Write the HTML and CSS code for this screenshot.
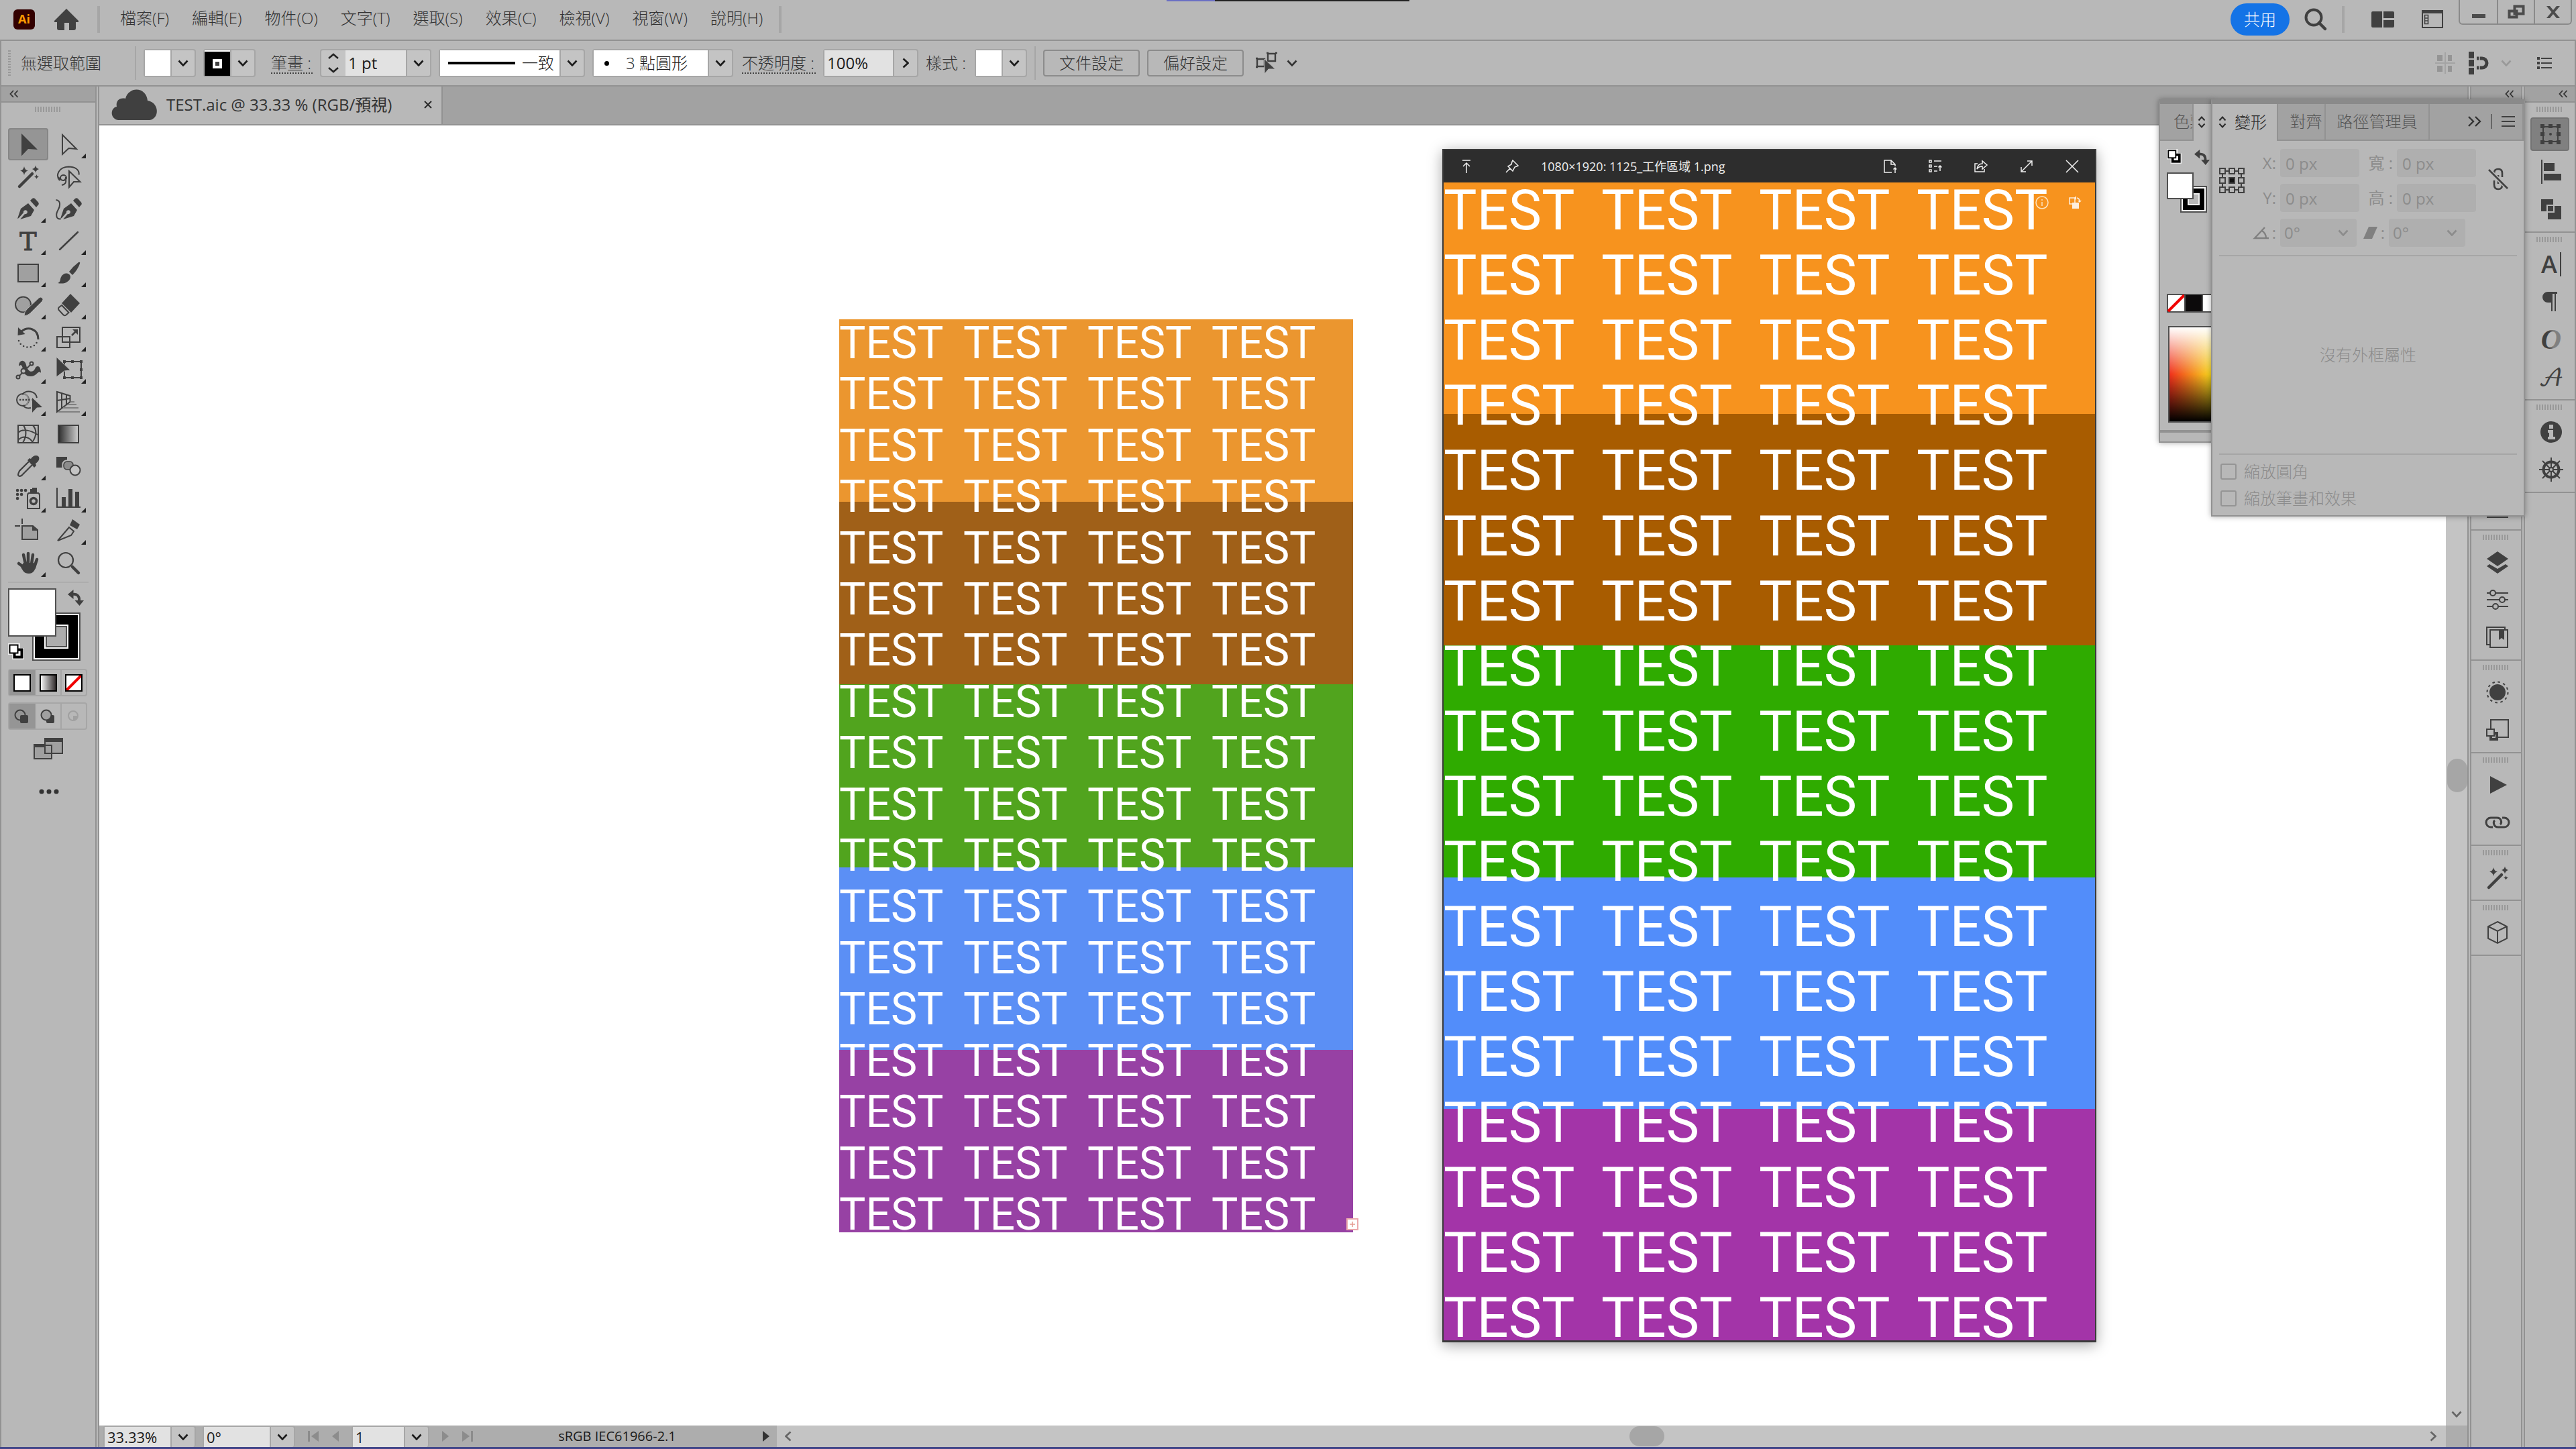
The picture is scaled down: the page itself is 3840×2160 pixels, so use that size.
FILE: index.html
```
<!DOCTYPE html>
<html lang="zh-Hant">
<head>
    <meta charset="UTF-8">
    <meta name="viewport" content="width=device-width, initial-scale=1.0">
    <title>TEST.aic @ 33.33 % (RGB/預視)</title>
    <link rel="stylesheet" href="styles.css">
</head>
<body>
    <svg class="defs" width="0" height="0" aria-hidden="true">
        <defs>
            <linearGradient id="grad-dark"><stop offset="0" stop-color="#2c2c2c"/><stop offset="1" stop-color="#cfcfcf"/></linearGradient>
            <linearGradient id="grad-light"><stop offset="0" stop-color="#ffffff"/><stop offset="1" stop-color="#2a2526"/></linearGradient>
            <linearGradient id="grad-o"><stop offset="0.4" stop-color="#404040"/><stop offset="0.6" stop-color="#808080"/></linearGradient>
            <symbol id="down" viewBox="0 0 16 10"><path d="M1.500 1.500 8 8.500 14.500 1.500" fill="none" stroke="currentColor" stroke-width="2.600"/></symbol>
            <symbol id="right" viewBox="0 0 10 16"><path d="M1.500 1.500 8.500 8 1.500 14.500" fill="none" stroke="currentColor" stroke-width="2.600"/></symbol>
            <symbol id="collapse" viewBox="0 0 14 12"><path d="M6 1 1.500 6 6 11M12.500 1 8 6 12.500 11" fill="none" stroke="currentColor" stroke-width="1.800"/></symbol>
            <symbol id="updown" viewBox="0 0 12 20"><path d="M1.500 7.500 6 2.500 10.500 7.500M1.500 12.500 6 17.500 10.500 12.500" fill="none" stroke="currentColor" stroke-width="2"/></symbol>
            <symbol id="swap" viewBox="0 0 24 24"><path d="M8 7c6-1 10 3 9 10" fill="none" stroke="currentColor" stroke-width="4"/><path d="M0 7 8.500 0v14zM10.500 16H24l-6.500 8z" fill="currentColor"/></symbol>
            <symbol id="defaults" viewBox="0 0 24 24">
                <path d="M0 0h18v7h6v17H6v-7H0z" fill="#ececec"/>
                <rect x="9.500" y="9.500" width="11" height="11" fill="#fff" stroke="#000" stroke-width="4"/>
                <rect x="2.500" y="2.500" width="12" height="12" fill="#fff" stroke="#000" stroke-width="2"/>
            </symbol>
            <symbol id="wand" viewBox="0 0 60 48">
                <path d="M17 39 36 20" stroke="currentColor" stroke-width="4.500" stroke-linecap="round"/>
                <path d="M24 9q1 5.500 6 6.500-5 1-6 6.500-1-5.500-6-6.500 5-1 6-6.500zM41 7.500q1 4.500 5 5.500-4 1-5 5.500-1-4.500-5-5.500 4-1 5-5.500zM42.500 21q.5 3 3.500 3.500-3 .5-3.500 3.500-.5-3-3.500-3.500 3-.5 3.500-3.500z" fill="currentColor"/>
            </symbol>
        </defs>
    </svg>

    <header class="menubar">
        <svg class="logo" width="32" height="30" viewBox="0 0 32 30"><rect width="32" height="30" rx="6" fill="#330000"/><text x="16" y="21" text-anchor="middle" class="logo-text">Ai</text></svg>
        <button class="home" aria-label="首頁"><svg width="36" height="32" viewBox="0 0 36 32"><path d="M18 0 36 18q1 2-2 2h-2v9q0 3-3 3h-7V21h-7v11H7q-3 0-3-3v-9H2q-3 0-2-2z" fill="#404040"/></svg></button>
        <nav class="menus">
            <button>檔案(F)</button>
            <button>編輯(E)</button>
            <button>物件(O)</button>
            <button>文字(T)</button>
            <button>選取(S)</button>
            <button>效果(C)</button>
            <button>檢視(V)</button>
            <button>視窗(W)</button>
            <button>說明(H)</button>
        </nav>
        <div class="menubar-end">
            <button class="share">共用</button>
            <button aria-label="搜尋"><svg width="34" height="34" viewBox="0 0 34 34"><circle cx="14" cy="14" r="11.500" fill="none" stroke="#404040" stroke-width="4"/><path d="m22 22 9 9" stroke="#404040" stroke-width="4.500" stroke-linecap="round"/></svg></button>
            <span class="bar-line"></span>
            <button class="workspace" aria-label="排列文件"><svg width="34" height="24" viewBox="0 0 34 24"><path d="M2 0h14v24H2q-2 0-2-2V2q0-2 2-2zM18 0h14q2 0 2 2v8H18zM18 13h16v9q0 2-2 2H18z" fill="#404040"/></svg></button>
            <button class="workspace" aria-label="工作區"><svg width="32" height="28" viewBox="0 0 32 28"><path d="M1 2h30v24H1z" fill="none" stroke="#404040" stroke-width="2"/><path d="M0 0h32v5H0z" fill="#404040"/><path d="M4.500 7.500h5v13h-5zM4.500 12h5M4.500 16h5" fill="none" stroke="#404040" stroke-width="1.600"/></svg></button>
            <div class="window-buttons">
                <button aria-label="最小化"><svg width="24" height="22" viewBox="0 0 24 22"><path d="M2 14h20v6H2z" fill="#4c4c4c"/></svg></button>
                <button aria-label="還原"><svg width="26" height="22" viewBox="0 0 26 22"><path d="M10.500 2.500h13v11h-13zM2.500 9.500h11v9h-11z" fill="#b8b8b8" stroke="#4c4c4c" stroke-width="4"/></svg></button>
                <button aria-label="關閉"><svg width="22" height="18" viewBox="0 0 22 18"><path d="M1 0h5l5 6 5-6h5l-7.500 9L21 18h-5l-5-6-5 6H1l7.500-9z" fill="#4c4c4c"/></svg></button>
            </div>
        </div>
    </header>

    <section class="controlbar">
        <span class="dots"></span>
        <span class="selection-name">無選取範圍</span>
        <span class="thin-line"></span>
        <button class="combo" aria-label="填色"><span class="swatch"></span><span class="arrow"><svg width="16" height="10"><use href="#down"/></svg></span></button>
        <button class="combo" aria-label="筆畫顏色"><span class="swatch swatch-stroke"></span><span class="arrow"><svg width="16" height="10"><use href="#down"/></svg></span></button>
        <label class="label-dotted label-stroke" for="stroke-width">筆畫 :</label>
        <div class="combo">
            <button class="arrow arrow-left" aria-label="增減"><svg width="18" height="30" viewBox="0 0 18 30"><path d="m2 8 7-6 7 6M2 22l7 6 7-6" fill="none" stroke="#222" stroke-width="2.500"/></svg></button>
            <input id="stroke-width" class="field field-pt" value="1 pt">
            <button class="arrow" aria-label="寬度清單"><svg width="16" height="10"><use href="#down"/></svg></button>
        </div>
        <button class="combo profile"><span class="paper"><span class="profile-line"></span>一致</span><span class="arrow"><svg width="16" height="10"><use href="#down"/></svg></span></button>
        <button class="combo brush"><span class="paper"><span class="brush-dot"></span>3 點圓形</span><span class="arrow"><svg width="16" height="10"><use href="#down"/></svg></span></button>
        <label class="label-dotted label-opacity" for="opacity">不透明度 :</label>
        <div class="combo">
            <input id="opacity" class="field field-opacity" value="100%">
            <button class="arrow" aria-label="不透明度滑桿"><svg width="10" height="16"><use href="#right"/></svg></button>
        </div>
        <span class="label-style">樣式 :</span>
        <button class="combo" aria-label="樣式"><span class="swatch"></span><span class="arrow"><svg width="16" height="10"><use href="#down"/></svg></span></button>
        <span class="thin-line"></span>
        <button class="push">文件設定</button>
        <button class="push">偏好設定</button>
        <button class="isolate" aria-label="選取類似物件"><svg width="36" height="34" viewBox="0 0 36 34"><path d="M19 3h11v11H19zM17 2h3M30 2h3M3 11h11v11H3zM1 10h3M1 23h3" fill="none" stroke="#404040" stroke-width="2.400"/><path d="m14 11 16 15H20l-6 7z" fill="#404040" stroke="#b8b8b8"/></svg><svg width="16" height="10"><use href="#down"/></svg></button>
        <div class="controlbar-end">
            <svg width="30" height="34" viewBox="0 0 30 34"><path d="M3 5h8v9H3zM19 5h6v9h-6zM3 21h8v9H3zM19 21h6v9h-6z" fill="#959595"/><path d="M0 16h30v2H0zM14 1h2v32h-2z" fill="#a4a4a4"/></svg>
            <button aria-label="貼齊"><svg width="28" height="34" viewBox="0 0 28 34"><path d="M0 0h8v10H0zM0 12h8v10H0zM0 24h8v10H0z" fill="#404040"/><path d="M12 10h8a6 6 0 0 1 0 14h-8" fill="none" stroke="#404040" stroke-width="5"/><path d="M16 5v24" stroke="#b8b8b8" stroke-width="1.500"/></svg></button>
            <svg class="faded" width="16" height="10"><use href="#down"/></svg>
            <button class="list-menu" aria-label="面板選單"><svg width="22" height="18" viewBox="0 0 22 18"><path d="M0 0h4v4H0zM0 7h4v4H0zM0 14h4v4H0zM6 1h16v2H6zM6 8h16v2H6zM6 15h16v2H6z" fill="#404040"/></svg></button>
        </div>
    </section>

    <div class="shell">
        <aside class="toolbox">
            <div class="strip"><svg width="14" height="12"><use href="#collapse"/></svg></div>
            <div class="grip"></div>
            <div class="tools">
                <button class="active" aria-label="選取工具"><svg viewBox="0 0 60 48"><path d="M20 8 44 32 30 31 20 41.500z" fill="#404040"/></svg></button>
                <button class="more" aria-label="直接選取"><svg viewBox="0 0 60 48"><path d="M21 10 42 31 30.500 30 21 39z" fill="none" stroke="#404040" stroke-width="2"/></svg></button>
                <button aria-label="魔術棒"><svg viewBox="0 0 60 48"><use href="#wand"/></svg></button>
                <button aria-label="套索"><svg viewBox="0 0 60 48"><path d="M17 30C10 22 16 10 30 9.500c9 0 17 4 15.500 12M27 26a4.500 4 0 1 1-9 0 4.500 4 0 1 1 9 0M15 25c5 7 11 6 11 0M26 29c1 4-1 7-6 8M31 16l16.500 16H38l-7 8z" fill="none" stroke="#404040" stroke-width="2"/></svg></button>
                <button class="more" aria-label="鋼筆"><svg viewBox="0 0 60 48"><path d="M14 39 19 24 30 16 39 26 34 35 18 40 25 32A3 3 0 1 0 23 30L16 38z" fill="#404040"/><path d="m33 12 3-3q2-1.500 4 0l5 5.500q1.500 2 0 4l-3 3.500z" fill="#404040"/></svg></button>
                <button aria-label="曲線"><svg viewBox="0 0 60 48"><g transform="translate(4 0)"><path d="M14 39 19 24 30 16 39 26 34 35 18 40 25 32A3 3 0 1 0 23 30L16 38z" fill="#404040"/><path d="m33 12 3-3q2-1.500 4 0l5 5.500q1.500 2 0 4l-3 3.500z" fill="#404040"/></g><path d="M11.500 11c8 1 6 10 3 15-4 7-3 14 4 13.500" fill="none" stroke="#404040" stroke-width="2"/></svg></button>
                <button class="more" aria-label="文字"><svg viewBox="0 0 60 48"><text x="30" y="38" text-anchor="middle" class="icon-t">T</text></svg></button>
                <button class="more" aria-label="線段"><svg viewBox="0 0 60 48"><path d="M17 37 44 11" stroke="#404040" stroke-width="2.500" stroke-linecap="round"/></svg></button>
                <button class="more" aria-label="矩形"><svg viewBox="0 0 60 48"><path d="M15 11h30v26H15z" fill="#a0a0a0" stroke="#404040" stroke-width="2"/></svg></button>
                <button class="more" aria-label="筆刷"><svg viewBox="0 0 60 48"><path d="M45 8q3-1 2 2-3 9-11 17l-5-5Q37 14 45 8z" fill="#404040"/><path d="M28 24.500c6 1 7 8 1 12-4 3.500-10 3.500-15 2.500 5-2 3-5 5-9q3-6 9-5.500z" fill="#404040"/></svg></button>
                <button class="more" aria-label="點滴筆刷"><svg viewBox="0 0 60 48"><circle cx="22.500" cy="23" r="11.500" fill="#a0a0a0" stroke="#404040" stroke-width="2"/><path d="M24 40q0-7 4-10l18-17q3-2 5 0t0 5L33 36q-3 3-9 4z" fill="#404040" stroke="#b8b8b8"/></svg></button>
                <button class="more" aria-label="橡皮擦"><svg viewBox="0 0 60 48"><path d="M33 7 47 21 34 35 20 21z" fill="#404040"/><path d="m20 24 10.500 11-4 3.500q-2 1.500-4 0L15.500 31q-1-2 0-3.500z" fill="none" stroke="#404040" stroke-width="2"/></svg></button>
                <button class="more" aria-label="旋轉"><svg viewBox="0 0 60 48"><path d="M20 15C30 7 45 11 45 27" fill="none" stroke="#404040" stroke-width="3"/><path d="m15 9-.5 12 11-2z" fill="#404040"/><path d="M16 29c4 12 22 13 27 2" fill="none" stroke="#404040" stroke-width="2.600" stroke-linecap="round" stroke-dasharray="0 5.500"/></svg></button>
                <button class="more" aria-label="縮放"><svg viewBox="0 0 60 48"><path d="M21 9h26v22H21zM13 23h19v16H13z" fill="none" stroke="#404040" stroke-width="2"/><path d="m35 21 7-7" stroke="#404040" stroke-width="2.500"/><path d="M36 12h8v8z" fill="#404040"/></svg></button>
                <button class="more" aria-label="寬度"><svg viewBox="0 0 60 48"><path d="M16 19c0-10 9-11 11-2 2 10 9 13 13 6 2-6 9-6 9 6-4-5-6 5-15 5-8 0-11-5-12-11-1-6-3-7-6-4z" fill="#404040"/><path d="M17 33 33 17" stroke="#404040" stroke-width="2"/><g fill="#b8b8b8" stroke="#404040" stroke-width="2"><circle cx="35" cy="15" r="2.500"/><circle cx="23" cy="26" r="3.500"/><circle cx="15" cy="35" r="2.500"/></g></svg></button>
                <button class="more" aria-label="任意變形"><svg viewBox="0 0 60 48"><path d="M24 12h25v24H24z" fill="none" stroke="#404040" stroke-width="2"/><path d="M22 10h4v4h-4zM34 10h4v4h-4zM47 10h4v4h-4zM47 22h4v4h-4zM47 34h4v4h-4zM34 34h4v4h-4zM22 34h4v4h-4z" fill="#404040"/><path d="m12 5 21 20-9 1-12 9z" fill="#404040" stroke="#b8b8b8"/></svg></button>
                <button class="more" aria-label="形狀建立程式"><svg viewBox="0 0 60 48"><circle cx="22" cy="21" r="9" fill="none" stroke="#404040" stroke-width="2"/><path d="M21 13c6-7 20-6 22 5M22 29c3 4 8 5 12 4" fill="none" stroke="#404040" stroke-width="2"/><path d="M24 12c8 2 8 15 1 17" fill="none" stroke="#8c8c8c" stroke-width="2"/><path d="M17 21h18" stroke="#404040" stroke-width="2.400" stroke-dasharray="2.400 2"/><path d="m36 18 15 14-8 .5-7 7.500z" fill="#404040"/></svg></button>
                <button class="more" aria-label="透視格點"><svg viewBox="0 0 60 48"><path d="m13 9 19.500 6v9L13 39zM20 11v22M27 13v15M13 22l19.500-3" fill="none" stroke="#404040" stroke-width="2"/><path d="M33 24h6M29 28h13M22 33h23M15 39h32" stroke="#808080" stroke-width="2"/></svg></button>
                <button aria-label="網格"><svg viewBox="0 0 60 48"><path d="M15 11h30v26H15zM15 22c7-7 20-3 29 3M15 33c8-8 18-4 22 4M23 11c5 8 5 16-1 26M37 11c7 8 5 16 0 24" fill="none" stroke="#404040" stroke-width="2"/></svg></button>
                <button aria-label="漸層"><svg viewBox="0 0 60 48"><path d="M15 11h30v26H15z" fill="url(#grad-dark)" stroke="#404040" stroke-width="2"/></svg></button>
                <button class="more" aria-label="檢色滴管"><svg viewBox="0 0 60 48"><path d="M31 17 17 31q-2 4-2 6 1 3 5 1l3-3 13-13" fill="none" stroke="#404040" stroke-width="2.200"/><path d="m29 15 3-3 2 1c3-5 8-6 11-4 3 3 1 8-4 11l1 3-3 3z" fill="#404040"/></svg></button>
                <button aria-label="漸變"><svg viewBox="0 0 60 48"><path d="M12 10h16v16H12z" fill="#404040"/><rect x="22" y="16" width="15" height="14" rx="5" fill="#8c8c8c" stroke="#b8b8b8" stroke-width="3"/><rect x="23" y="17" width="14" height="12" rx="5" fill="#8c8c8c" stroke="#404040" stroke-width="1.500"/><circle cx="40" cy="30" r="7.500" fill="#c4c4c4" stroke="#404040" stroke-width="2"/></svg></button>
                <button class="more" aria-label="符號噴灑"><svg viewBox="0 0 60 48"><path d="M14 12h.1M20 12h.1M26 12h.1M14 18h.1M20 18h.1M14 24h.1" stroke="#404040" stroke-width="4.500" stroke-linecap="round"/><path d="M29 19q0-2 2-3h14q2 1 2 3v20H29z" fill="none" stroke="#404040" stroke-width="2"/><path d="M33 10h3V8h7v7H33z" fill="#404040"/><circle cx="38" cy="28" r="4.500" fill="none" stroke="#404040" stroke-width="3.500"/></svg></button>
                <button class="more" aria-label="圖表"><svg viewBox="0 0 60 48"><path d="M13 8v29h35" fill="none" stroke="#404040" stroke-width="2"/><path d="M20 22h6v15h-6zM30 10h6v27h-6zM40 14h6v23h-6z" fill="#404040"/></svg></button>
                <button aria-label="工作區域"><svg viewBox="0 0 60 48"><path d="M21 17h16l7 6v14H21z" fill="#a0a0a0" stroke="#404040" stroke-width="2"/><path d="M36 17v7h8z" fill="#404040"/><path d="M21 6v8M10 17h8" stroke="#404040" stroke-width="2"/></svg></button>
                <button class="more" aria-label="切片"><svg viewBox="0 0 60 48"><path d="m36 7 11 8-4 7-11-6z" fill="#404040"/><path d="m31 19 7 6-4 6-20 8z" fill="none" stroke="#404040" stroke-width="2"/></svg></button>
                <button class="more" aria-label="手形"><svg viewBox="0 0 60 48"><path d="m23 12 3 14M30 10v14M37 12l-2 14M43 19l-4 12M16 25l8 6" stroke="#404040" stroke-width="4.500" stroke-linecap="round"/><path d="M23 24h15l4 4c-2 8-5 12-11 12-7 0-9-4-12-10z" fill="#404040"/></svg></button>
                <button aria-label="縮放顯示"><svg viewBox="0 0 60 48"><circle cx="26" cy="20" r="11" fill="none" stroke="#404040" stroke-width="2.200"/><path d="m36 30 9 9" stroke="#404040" stroke-width="4.500" stroke-linecap="round"/></svg></button>
            </div>
            <div class="paint">
                <svg width="120" height="108" viewBox="0 0 120 108">
                    <path d="M37 37h70v70H37z" fill="#fff" stroke="#505050" stroke-width="2"/>
                    <path d="M40 40h64v64H40z"/>
                    <path d="M54 54h36v36H54z" fill="#fff"/>
                    <path d="M57 57h30v30H57z" fill="#adadad" stroke="#505050" stroke-width="2"/>
                    <path d="M1 1h70v70H1z" fill="#fff" stroke="#505050" stroke-width="2"/>
                    <use href="#swap" x="89" y="2" width="24" height="24"/>
                    <use href="#defaults" x="0" y="82" width="24" height="24"/>
                </svg>
            </div>
            <div class="segment">
                <button class="on" aria-label="顏色"><svg width="26" height="26"><rect x="1" y="1" width="24" height="24" fill="#fff" stroke="#000" stroke-width="2"/></svg></button>
                <button aria-label="漸層"><svg width="26" height="26"><rect x="1" y="1" width="24" height="24" fill="url(#grad-light)" stroke="#000" stroke-width="2"/></svg></button>
                <button aria-label="無"><svg width="26" height="26"><rect x="1" y="1" width="24" height="24" fill="#fff"/><path d="M2 24 24 2" stroke="#f00000" stroke-width="4"/><rect x="1" y="1" width="24" height="24" fill="none" stroke="#000" stroke-width="2"/></svg></button>
            </div>
            <div class="segment">
                <button class="on" aria-label="一般繪製"><svg width="24" height="22"><circle cx="9" cy="9" r="7.500" fill="none" stroke="#404040" stroke-width="2"/><rect x="9" y="9" width="12" height="12" rx="2" fill="#404040"/></svg></button>
                <button aria-label="繪製下層"><svg width="24" height="22"><rect x="9" y="9" width="12" height="12" rx="2" fill="#404040"/><circle cx="9" cy="9" r="7.500" fill="#a0a0a0" stroke="#404040" stroke-width="2"/></svg></button>
                <button aria-label="繪製內側"><svg width="24" height="22"><circle cx="11" cy="10" r="7" fill="none" stroke="#a0a0a0" stroke-width="2"/><path d="M11 10h7q-1 6-7 7z" fill="#a0a0a0"/></svg></button>
            </div>
            <button class="screen-mode" aria-label="螢幕模式"><svg width="44" height="32" viewBox="0 0 44 32"><path d="M1 11h26v20H1zM17 3h26v20H17z" fill="#a0a0a0" stroke="#404040" stroke-width="2"/><path d="M0 9h16v5H0zM16 0h28v6H16z" fill="#404040"/></svg></button>
            <button class="edit-tools" aria-label="編輯工具列"><svg width="30" height="8"><circle cx="4" cy="4" r="3.500"/><circle cx="15" cy="4" r="3.500"/><circle cx="26" cy="4" r="3.500"/></svg></button>
        </aside>

        <main class="document">
            <div class="tabs">
                <div class="tab">
                    <svg width="68" height="46" viewBox="0 0 68 46"><path d="M10 46C-2 44-2 28 8 26 6 16 14 12 21 14 26-5 52-4 54 17 72 20 72 44 57 46z" fill="#404040"/></svg>
                    <span>TEST.aic @ 33.33 % (RGB/預視)</span>
                    <button aria-label="關閉"><svg width="12" height="12"><path d="m1 1 10 10M11 1 1 11" stroke="#2b2b2b" stroke-width="2"/></svg></button>
                </div>
            </div>
            <div class="view">
                <div class="canvas">
                    <section class="art artboard">
                        <div class="bands"><i></i><i></i><i></i><i></i><i></i></div>
                        <div class="lines">
                            <p>TEST&#9;TEST&#9;TEST&#9;TEST</p>
                            <p>TEST&#9;TEST&#9;TEST&#9;TEST</p>
                            <p>TEST&#9;TEST&#9;TEST&#9;TEST</p>
                            <p>TEST&#9;TEST&#9;TEST&#9;TEST</p>
                            <p>TEST&#9;TEST&#9;TEST&#9;TEST</p>
                            <p>TEST&#9;TEST&#9;TEST&#9;TEST</p>
                            <p>TEST&#9;TEST&#9;TEST&#9;TEST</p>
                            <p>TEST&#9;TEST&#9;TEST&#9;TEST</p>
                            <p>TEST&#9;TEST&#9;TEST&#9;TEST</p>
                            <p>TEST&#9;TEST&#9;TEST&#9;TEST</p>
                            <p>TEST&#9;TEST&#9;TEST&#9;TEST</p>
                            <p>TEST&#9;TEST&#9;TEST&#9;TEST</p>
                            <p>TEST&#9;TEST&#9;TEST&#9;TEST</p>
                            <p>TEST&#9;TEST&#9;TEST&#9;TEST</p>
                            <p>TEST&#9;TEST&#9;TEST&#9;TEST</p>
                            <p>TEST&#9;TEST&#9;TEST&#9;TEST</p>
                            <p>TEST&#9;TEST&#9;TEST&#9;TEST</p>
                            <p>TEST&#9;TEST&#9;TEST&#9;TEST</p>
                        </div>
                        <svg class="overset" width="18" height="18"><path d="M1 1h16v16H1z" fill="#fff" stroke="#eba9ac" stroke-width="2"/><path d="M5 9h8M9 5v8" stroke="#e59a90" stroke-width="1.500"/></svg>
                    </section>
                </div>
                <div class="vscroll"><span class="vthumb"></span><svg width="16" height="10"><use href="#down"/></svg></div>
            </div>
            <footer class="status">
                <div class="status-info">
                    <div class="combo"><input class="field" aria-label="縮放" value="33.33%"><button class="arrow" aria-label="縮放清單"><svg width="16" height="10"><use href="#down"/></svg></button></div>
                    <div class="combo"><input class="field" aria-label="旋轉" value="0°"><button class="arrow" aria-label="旋轉清單"><svg width="16" height="10"><use href="#down"/></svg></button></div>
                    <div class="pager">
                        <svg width="18" height="16"><path d="M1 0h3v16H1zM17 0v16L6 8z"/></svg>
                        <svg width="12" height="16"><path d="M11 0v16L1 8z"/></svg>
                    </div>
                    <div class="combo"><input class="field field-page" aria-label="工作區域" value="1"><button class="arrow" aria-label="工作區域清單"><svg width="16" height="10"><use href="#down"/></svg></button></div>
                    <div class="pager">
                        <svg width="12" height="16"><path d="M1 0v16L11 8z"/></svg>
                        <svg width="18" height="16"><path d="M14 0h3v16h-3zM1 0v16L12 8z"/></svg>
                    </div>
                    <span class="profile-name">sRGB IEC61966-2.1</span>
                    <button class="status-more" aria-label="狀態列選單"><svg width="12" height="16"><path d="M1 0v16L11 8z" fill="#333"/></svg></button>
                </div>
                <div class="hscroll">
                    <svg class="flip" width="10" height="16"><use href="#right"/></svg>
                    <span class="hthumb"></span>
                    <svg width="10" height="16"><use href="#right"/></svg>
                </div>
                <div class="corner"></div>
            </footer>
        </main>

        <aside class="dock dock-inner">
            <div class="strip"><svg width="14" height="12"><use href="#collapse"/></svg></div>
            <div class="dock-group dock-covered"><button aria-label="筆畫"><svg width="34" height="34" viewBox="0 0 34 34"><path d="M1 3h32v2H1zM1 14h32v4H1zM1 28h32v5H1z"/></svg></button></div>
            <div class="dock-group">
                <div class="grip"></div>
                <button aria-label="圖層"><svg width="34" height="34" viewBox="0 0 34 34"><path d="M17 1 33 12 17 23 1 12z"/><path d="m1 23 4-3 12 7 12-7 4 3-16 11z"/></svg></button>
                <button aria-label="內容"><svg width="34" height="34" viewBox="0 0 34 34"><path d="M1 7h32M1 17h32M1 27h32" stroke="#404040" stroke-width="2"/><g fill="#b8b8b8" stroke="#404040" stroke-width="2"><circle cx="10" cy="7" r="4"/><circle cx="24" cy="17" r="4"/><circle cx="14" cy="27" r="4"/></g></svg></button>
                <button aria-label="資料庫"><svg width="34" height="34" viewBox="0 0 34 34"><path d="M5 28H1V2h27v4M6 6h26v26H6z" fill="none" stroke="#404040" stroke-width="2"/><path d="M19 6h8v15l-4-3-4 3z"/></svg></button>
            </div>
            <div class="dock-group">
                <div class="grip"></div>
                <button aria-label="外觀"><svg width="34" height="34" viewBox="0 0 34 34"><circle cx="17" cy="17" r="12"/><circle cx="17" cy="17" r="15.500" fill="none" stroke="#404040" stroke-width="2" stroke-dasharray="3.600 4.500"/></svg></button>
                <button aria-label="繪圖樣式"><svg width="34" height="34" viewBox="0 0 34 34"><path d="M7 15V2h26v26H18" fill="none" stroke="#404040" stroke-width="2"/><path d="M5 20h13v13H5z"/><path d="M9 24h5v5H9z" fill="#b8b8b8"/><path d="M1 16h11v10H1z" fill="#b8b8b8" stroke="#404040" stroke-width="2"/></svg></button>
            </div>
            <div class="dock-group">
                <div class="grip"></div>
                <button aria-label="動作"><svg width="34" height="34" viewBox="0 0 34 34"><path d="M6 4 31 17 6 30z"/></svg></button>
                <button aria-label="連結"><svg width="38" height="18" viewBox="0 0 38 18"><path d="M12 16H9A7 7 0 0 1 9 2h9c7 0 8 8 5 10M26 2h3a7 7 0 0 1 0 14h-9c-7 0-8-8-5-10" fill="none" stroke="#404040" stroke-width="3"/></svg></button>
            </div>
            <div class="dock-group">
                <div class="grip"></div>
                <button aria-label="魔術棒"><svg width="60" height="48"><use href="#wand"/></svg></button>
            </div>
            <div class="dock-group">
                <div class="grip"></div>
                <button aria-label="3D"><svg width="34" height="34" viewBox="0 0 34 34"><path d="m17 1 14 7v18l-14 7-14-7V8zM3 8l14 7 14-7M17 15v18" fill="none" stroke="#404040" stroke-width="2"/></svg></button>
            </div>
        </aside>

        <aside class="dock">
            <div class="strip"><svg width="14" height="12"><use href="#collapse"/></svg></div>
            <div class="dock-group">
                <div class="grip"></div>
                <button class="active" aria-label="變形"><svg width="30" height="30" viewBox="0 0 30 30"><path d="M4 4h22v22H4z" fill="none" stroke="#404040" stroke-width="2"/><path d="M0 0h6v6H0zM12 0h6v6h-6zM24 0h6v6h-6zM0 12h6v6H0zM24 12h6v6h-6zM0 24h6v6H0zM12 24h6v6h-6zM24 24h6v6h-6z"/><circle cx="15" cy="15" r="2"/></svg></button>
                <button aria-label="對齊"><svg width="30" height="36" viewBox="0 0 30 36"><path d="M0 0h2v36H0zM4 5h16v12H4zM4 21h26v10H4z"/></svg></button>
                <button aria-label="路徑管理員"><svg width="30" height="30" viewBox="0 0 30 30"><path d="M0 0h18v8H8v10H0zM20 10h10v20H10V20h10zM10 10h8v8h-8z"/></svg></button>
            </div>
            <div class="dock-group">
                <div class="grip"></div>
                <button aria-label="字元"><svg width="30" height="56" viewBox="0 0 30 56"><text x="12" y="41" text-anchor="middle" class="icon-a">A</text><path d="M28 10h2v36h-2z"/></svg></button>
                <button aria-label="段落"><svg width="30" height="36" viewBox="0 0 30 36"><path d="M10 3h14v3h-2v26h-2V6h-3v26h-2V19h-5a8 8 0 0 1 0-16z"/></svg></button>
                <button aria-label="OpenType"><svg width="40" height="56" viewBox="0 0 40 56"><text x="20" y="42" text-anchor="middle" class="icon-o">O</text></svg></button>
                <button aria-label="字符"><svg width="40" height="56" viewBox="0 0 40 56"><text x="20" y="41" text-anchor="middle" class="icon-script">𝒜</text></svg></button>
            </div>
            <div class="dock-group">
                <div class="grip"></div>
                <button aria-label="資訊"><svg width="32" height="32" viewBox="0 0 32 32"><circle cx="16" cy="16" r="16"/><path d="M13 5h6v6h-6zM11 13h8v10h3v4H11v-4h2v-6h-2z" fill="#b8b8b8"/></svg></button>
                <button aria-label="導覽器"><svg width="36" height="36" viewBox="0 0 36 36"><g fill="none" stroke="#404040"><circle cx="18" cy="18" r="11.500" stroke-width="4"/><circle cx="18" cy="18" r="3" stroke-width="2"/><path d="M18 0v15M18 21v15M0 18h15M21 18h15M5 5l11 11M20 20l11 11M31 5 20 16M16 20 5 31" stroke-width="2"/></g></svg></button>
            </div>
        </aside>
    </div>
    <div class="taskbar-edge"></div>
    <div class="capture-edge"></div>

    <section class="panel color-panel">
        <div class="panel-tabs"><button class="color-name">色票</button><span class="active"><svg width="12" height="20"><use href="#updown"/></svg></span></div>
        <div class="color-body">
            <svg width="64" height="96" viewBox="0 0 64 96">
                <use href="#defaults" x="0" y="0" width="22" height="22"/>
                <use href="#swap" x="41" y="1" width="23" height="23"/>
                <path d="M21 56h38v38H21z" fill="#fff" stroke="#505050" stroke-width="2"/>
                <path d="M24 59h32v32H24z"/>
                <path d="M32 67h16v16H32z" fill="#b8b8b8" stroke="#eee" stroke-width="2"/>
                <path d="M1 36h38v38H1z" fill="#fff" stroke="#505050" stroke-width="2"/>
            </svg>
            <svg class="chips" width="66" height="28" viewBox="0 0 66 28"><path d="M1 1h100v26H1z" fill="#fff" stroke="#505050" stroke-width="2"/><path d="M2 26 26 2" stroke="#f00000" stroke-width="4"/><path d="M27 2h26v24H27z" fill="#0c0a0b"/><path d="M27 1v26M53 1v26" stroke="#505050" stroke-width="2"/></svg>
            <div class="spectrum"></div>
        </div>
    </section>

    <section class="panel transform-panel">
        <div class="panel-tabs">
            <button class="active"><svg width="12" height="20"><use href="#updown"/></svg>變形</button>
            <button class="tab-align">對齊</button>
            <button class="tab-path">路徑管理員</button>
            <div class="panel-tools">
                <svg width="20" height="16"><path d="m1 1 7 7-7 7M11 1l7 7-7 7" fill="none" stroke="#333" stroke-width="2.400"/></svg>
                <i></i>
                <svg width="20" height="16"><path d="M0 1h20M0 8h20M0 15h20" stroke="#404040" stroke-width="2"/></svg>
            </div>
        </div>
        <div class="transform-body">
            <svg class="ref-point" width="38" height="38" viewBox="0 0 38 38"><g fill="none" stroke="#404040" stroke-width="2"><path d="M5 5h28v28H5z"/><g fill="#b8b8b8"><path d="M1 1h8v8H1zM15 1h8v8h-8zM29 1h8v8h-8zM1 15h8v8H1zM29 15h8v8h-8zM1 29h8v8H1zM15 29h8v8h-8zM29 29h8v8h-8z"/></g></g><path d="M14 14h10v10H14z" fill="#404040"/><path d="M16 16h6v6h-6z" fill="#111"/></svg>
            <div class="values">
                <div class="value-row">
                    <label for="tx">X:</label><input id="tx" value="0 px" disabled>
                    <label for="tw">寬 :</label><input id="tw" value="0 px" disabled>
                </div>
                <div class="value-row">
                    <label for="ty">Y:</label><input id="ty" value="0 px" disabled>
                    <label for="th">高 :</label><input id="th" value="0 px" disabled>
                </div>
                <div class="value-row angles">
                    <label for="rot"><svg width="24" height="18"><path d="M17 1 2 17h21M13 6q6 4 6 11" fill="none" stroke="#808080" stroke-width="2.400"/></svg>:</label>
                    <span class="pick"><select id="rot" disabled><option>0°</option></select><svg width="16" height="10"><use href="#down"/></svg></span>
                    <label for="shear"><svg width="22" height="18"><path d="M8 0h13l-8 18H0z" fill="#808080"/></svg>:</label>
                    <span class="pick"><select id="shear" disabled><option>0°</option></select><svg width="16" height="10"><use href="#down"/></svg></span>
                </div>
            </div>
            <svg class="unlink" width="32" height="34" viewBox="0 0 32 34"><path d="M10 12V8q0-6 6-6t6 6v6M10 19v6q0 7 6 7t6-6v-2M16 11v3M16 19v5" fill="none" stroke="#404040" stroke-width="2.600"/><path d="m2 3 28 28" stroke="#b8b8b8" stroke-width="6"/><path d="m2 3 28 28" stroke="#404040" stroke-width="2.600"/></svg>
        </div>
        <p class="empty">沒有外框屬性</p>
        <div class="checks">
            <label><input type="checkbox" disabled>縮放圓角</label>
            <label><input type="checkbox" disabled>縮放筆畫和效果</label>
        </div>
    </section>

    <section class="viewer">
        <header class="viewer-bar">
            <button aria-label="置頂"><svg viewBox="0 0 20 20"><path d="M4 1h12M10 20V5M5 10l5-5 5 5"/></svg></button>
            <button aria-label="釘選"><svg viewBox="0 0 20 20"><path d="m11 1 8 8-2 1-3 1-3 6-7-7 5-3 1-4zM7 13l-6 6"/></svg></button>
            <h1>1080×1920: 1125_工作區域 1.png</h1>
            <button aria-label="開啟檔案"><svg viewBox="0 0 20 20"><path d="M13 19H2V1h10l6 6v3M12 1v6h6M18 20v-8M15.500 14.500 18 12l2 2.500"/></svg></button>
            <button aria-label="清單"><svg viewBox="0 0 20 20"><path d="M8 2h11M8 10h5M8 17h5M17 17V9M14.500 11.500 17 9l2.500 2.500"/><path d="M1 1h3v3H1zM1 8h3v3H1zM1 15h3v3H1z"/></svg></button>
            <button aria-label="分享"><svg viewBox="0 0 20 20"><path d="M5 6H1v12h14v-4M4 14c1-6 4-8 8-8V2l7 6-7 6v-4c-4 0-6 1-8 4z"/></svg></button>
            <button aria-label="放大"><svg viewBox="0 0 20 20"><path d="M2 18 18 2M11 2h7v7M2 11v7h7"/></svg></button>
            <button aria-label="關閉"><svg viewBox="0 0 20 20"><path d="m1 1 18 18M19 1 1 19"/></svg></button>
        </header>
        <div class="art photo">
            <div class="bands"><i></i><i></i><i></i><i></i><i></i></div>
            <div class="lines">
                <p>TEST&#9;TEST&#9;TEST&#9;TEST</p>
                <p>TEST&#9;TEST&#9;TEST&#9;TEST</p>
                <p>TEST&#9;TEST&#9;TEST&#9;TEST</p>
                <p>TEST&#9;TEST&#9;TEST&#9;TEST</p>
                <p>TEST&#9;TEST&#9;TEST&#9;TEST</p>
                <p>TEST&#9;TEST&#9;TEST&#9;TEST</p>
                <p>TEST&#9;TEST&#9;TEST&#9;TEST</p>
                <p>TEST&#9;TEST&#9;TEST&#9;TEST</p>
                <p>TEST&#9;TEST&#9;TEST&#9;TEST</p>
                <p>TEST&#9;TEST&#9;TEST&#9;TEST</p>
                <p>TEST&#9;TEST&#9;TEST&#9;TEST</p>
                <p>TEST&#9;TEST&#9;TEST&#9;TEST</p>
                <p>TEST&#9;TEST&#9;TEST&#9;TEST</p>
                <p>TEST&#9;TEST&#9;TEST&#9;TEST</p>
                <p>TEST&#9;TEST&#9;TEST&#9;TEST</p>
                <p>TEST&#9;TEST&#9;TEST&#9;TEST</p>
                <p>TEST&#9;TEST&#9;TEST&#9;TEST</p>
                <p>TEST&#9;TEST&#9;TEST&#9;TEST</p>
            </div>
            <div class="photo-tools">
                <svg width="20" height="20"><circle cx="10" cy="10" r="9" fill="none" stroke="#fde3c0" stroke-width="1.500"/><path d="M10 9v6M10 5v2" stroke="#fde3c0" stroke-width="1.500"/></svg>
                <svg width="20" height="20"><path d="M2 3h8v9H2zM13 3q4 1 4 5" fill="none" stroke="#fdeedd" stroke-width="1.500"/><path d="M6 10h10v9H6zM12 0v6l-3-3zM14 7h6l-3 3z" fill="#fdeedd"/></svg>
            </div>
        </div>
    </section>
</body>
</html>
```
FILE: styles.css
```
* {
    margin: 0;
    padding: 0;
    box-sizing: border-box;
}

:root {
    --face: #b8b8b8;
    --dark: #a2a2a2;
    --line: #929292;
    --ink: #404040;
}

body {
    height: 100vh;
    display: flex;
    flex-direction: column;
    position: relative;
    overflow: hidden;
    background: var(--face);
    color: #333;
    font-family: "Open Sans", "Noto Sans CJK TC", sans-serif;
    font-size: 24px;
    font-weight: 300;
    line-height: 32px;
}

button, input, select {
    font: inherit;
    color: inherit;
    border: none;
    background: none;
    border-radius: 0;
}

button {
    display: flex;
    align-items: center;
    justify-content: center;
    white-space: nowrap;
}

svg {
    display: block;
    flex: none;
    overflow: visible;
}

.defs {
    position: absolute;
}

/* menu bar */
.menubar {
    flex: none;
    height: 61px;
    display: flex;
    align-items: center;
    padding: 0 6px 2px 20px;
    border-bottom: 2px solid var(--line);
}

.logo-text {
    font: bold 18px "Open Sans", sans-serif;
    fill: #ff9a00;
}

.home {
    margin-left: 29px;
}

.menus {
    display: flex;
    gap: 34px;
    height: 40px;
    margin-left: 28px;
    padding: 0 24px 0 30px;
    border: solid #a6a6a6;
    border-width: 0 4px;
}

.menus button {
    padding-bottom: 4px;
}

.menubar-end {
    margin-left: auto;
    align-self: stretch;
    display: flex;
    align-items: center;
    gap: 22px;
}

.share {
    width: 88px;
    height: 48px;
    border-radius: 24px;
    background: #1473e6;
    color: #fff;
}

.bar-line {
    width: 4px;
    height: 40px;
    background: #a6a6a6;
}

.workspace {
    width: 34px;
    margin-left: 18px;
}

.window-buttons {
    align-self: flex-start;
    display: flex;
    height: 37px;
    border: 2px solid #8a8a8a;
    border-top: none;
    border-radius: 0 0 6px 6px;
}

.window-buttons button {
    width: 55px;
}

.window-buttons button + button {
    border-left: 2px solid #8a8a8a;
}

/* control bar */
.controlbar {
    flex: none;
    height: 68px;
    display: flex;
    align-items: center;
    gap: 11px;
    padding-left: 10px;
    border: 2px solid var(--line);
    border-top: none;
}

.dots {
    width: 4px;
    height: 38px;
    background: repeating-linear-gradient(#999 0 2px, transparent 2px 4px);
}

.selection-name {
    width: 163px;
    padding-left: 4px;
}

.thin-line {
    width: 2px;
    height: 50px;
    background: #a6a6a6;
}

.combo {
    display: flex;
    align-items: stretch;
    height: 42px;
    border: 2px solid #a6a6a6;
    border-radius: 4px;
    background: #c4c4c4;
    color: #1c1c1c;
    font-weight: 400;
}

.arrow {
    width: 36px;
    display: flex;
    align-items: center;
    justify-content: center;
    border-left: 2px solid #a6a6a6;
}

.arrow-left {
    border-left: none;
}

.swatch {
    width: 38px;
    background: #fff;
}

.swatch-stroke {
    background: linear-gradient(#404040, #404040) center / 6px 6px no-repeat, linear-gradient(#fff, #fff) center / 14px 14px no-repeat, #000;
    border-top: 2px solid #fff;
}

.label-dotted {
    white-space: nowrap;
    background: repeating-linear-gradient(90deg, #444 0 2px, transparent 2px 4px) bottom / 100% 2px no-repeat;
}

.label-stroke {
    width: 62px;
    margin-left: 12px;
}

.label-opacity {
    width: 110px;
    margin-left: 2px;
}

.label-style {
    width: 62px;
    white-space: nowrap;
}

.field {
    width: 102px;
    padding: 0 4px;
    background: #e2e2e2;
}

.field-pt {
    width: 90px;
}

.paper {
    display: flex;
    align-items: center;
    justify-content: space-between;
    flex: 1;
    background: #fff;
    font-weight: 300;
}

.profile {
    width: 218px;
}

.profile .paper {
    padding: 0 8px 0 12px;
}

.profile-line {
    width: 100px;
    height: 4px;
    background: #000;
}

.brush {
    width: 210px;
}

.brush .paper {
    padding: 0 30px 0 16px;
}

.brush-dot {
    width: 7px;
    height: 7px;
    border-radius: 50%;
    background: #000;
}

.push {
    width: 144px;
    height: 40px;
    border: 2px solid #8c8c8c;
    border-radius: 4px;
}

.isolate {
    gap: 11px;
    margin-left: 6px;
}

.controlbar-end {
    margin-left: auto;
    display: flex;
    align-items: center;
    gap: 20px;
    padding-right: 34px;
}

.faded {
    color: #999;
}

.list-menu {
    margin-left: 18px;
}

/* shell */
.shell {
    flex: 1;
    min-height: 0;
    display: flex;
    border: solid var(--line);
    border-width: 0 2px;
}

.strip {
    height: 24px;
    display: flex;
    align-items: center;
    padding: 0 12px;
    background: var(--dark);
    border-bottom: 2px solid var(--line);
}

.grip {
    width: 40px;
    height: 8px;
    margin: 6px auto 5px;
    background: repeating-linear-gradient(90deg, #999 0 2px, transparent 2px 4px);
}

.toolbox {
    flex: none;
    width: 146px;
    border-right: 6px double var(--line);
}

.tools {
    display: grid;
    grid-template-columns: repeat(2, 60px);
    grid-auto-rows: 48px;
    margin: 24px 10px 0;
    padding-bottom: 4px;
    border-bottom: 2px solid #adadad;
}

.tools button {
    position: relative;
    color: var(--ink);
}

.tools svg {
    width: 60px;
    height: 48px;
}

.tools .active {
    background: #959595;
    box-shadow: inset 0 0 0 2px #868686;
    border-radius: 4px;
}

.tools .more::after {
    content: "";
    position: absolute;
    right: 4px;
    bottom: 3px;
    width: 7px;
    height: 7px;
    background: #222;
    clip-path: polygon(100% 0, 100% 100%, 0 100%);
}

.paint {
    margin: 8px 10px 12px;
    color: var(--ink);
}

.segment {
    display: grid;
    grid-template-columns: repeat(3, 1fr);
    width: 118px;
    height: 41px;
    margin: 0 10px 9px;
    border: 2px solid #a6a6a6;
    border-radius: 4px;
}

.segment button + button {
    border-left: 2px solid #a6a6a6;
}

.segment .on {
    background: #959595;
}

.screen-mode {
    margin: 12px 0 0 48px;
}

.edit-tools {
    margin: 44px 0 0 56px;
    fill: #333;
}

/* document */
.document {
    flex: 1;
    min-width: 0;
    display: flex;
    flex-direction: column;
}

.tabs {
    flex: none;
    height: 58px;
    display: flex;
    background: var(--dark);
    border-bottom: 2px solid var(--line);
}

.tab {
    display: flex;
    align-items: center;
    gap: 14px;
    width: 512px;
    padding: 0 14px 2px 18px;
    background: var(--face);
    border-right: 2px solid var(--line);
    font-weight: 400;
    white-space: nowrap;
}

.tab button {
    margin-left: auto;
}

.view {
    flex: 1;
    min-height: 0;
    display: flex;
}

.canvas {
    flex: 1;
    position: relative;
    overflow: hidden;
    background: #fff;
}

.vscroll, .hscroll {
    display: flex;
    align-items: center;
    background: #c4c4c4;
    color: #666;
}

.vscroll {
    width: 32px;
    flex-direction: column;
    justify-content: flex-end;
    padding-bottom: 12px;
    position: relative;
}

.vthumb, .hthumb {
    background: #a6a6a6;
    border-radius: 16px;
}

.vthumb {
    position: absolute;
    top: 944px;
    right: 0;
    width: 30px;
    height: 50px;
}

.status {
    flex: none;
    display: flex;
    height: 32px;
    font-size: 22px;
}

.status-info {
    width: 1010px;
    display: flex;
    background: #adadad;
    padding-left: 6px;
    gap: 10px;
}

.status .combo {
    height: 32px;
    border-bottom: none;
}

.status .field {
    width: 98px;
}

.status .field-page {
    width: 76px;
}

.pager {
    width: 64px;
    display: flex;
    align-items: center;
    justify-content: center;
    gap: 18px;
    fill: #8c8c8c;
}

.profile-name {
    flex: 1;
    text-align: center;
    color: #1c1c1c;
    font-size: 20px;
    font-weight: 400;
}

.status-more {
    width: 32px;
}

.hscroll {
    flex: 1;
    justify-content: space-between;
    padding: 0 14px 0 12px;
}

.hthumb {
    width: 52px;
    height: 30px;
    margin-left: 108px;
}

.flip {
    transform: rotate(180deg);
}

.corner {
    width: 32px;
    background: #adadad;
}

/* striped art, on the canvas and in the viewer */
.art {
    position: absolute;
    display: grid;
    overflow: hidden;
    color: #fff;
    font-family: Roboto, sans-serif;
    font-weight: 400;
}

.bands, .lines {
    grid-area: 1 / 1;
}

.bands {
    display: grid;
    grid-template-rows: repeat(5, 1fr);
}

.lines {
    display: flex;
    flex-direction: column;
    justify-content: space-between;
    padding-top: 9px;
    white-space: pre;
}

.artboard {
    left: 1103px;
    top: 289px;
    width: 766px;
    height: 1361px;
    overflow: visible;
    font-size: 66px;
    line-height: 53px;
    tab-size: 185px;
}

.artboard i:nth-child(1) { background: #eb962f; }
.artboard i:nth-child(2) { background: #a06018; }
.artboard i:nth-child(3) { background: #51a41e; }
.artboard i:nth-child(4) { background: #5b8ff5; }
.artboard i:nth-child(5) { background: #9741a4; }

.overset {
    position: absolute;
    right: -8px;
    bottom: 3px;
}

.photo {
    position: relative;
    flex: 1;
    font-size: 83px;
    line-height: 66px;
    tab-size: 235px;
}

.photo i:nth-child(1) { background: #f7931e; }
.photo i:nth-child(2) { background: #a85c00; }
.photo i:nth-child(3) { background: #2fab00; }
.photo i:nth-child(4) { background: #528dfa; }
.photo i:nth-child(5) { background: #a334a8; }

.photo-tools {
    position: absolute;
    top: 20px;
    right: 20px;
    display: flex;
    gap: 29px;
}

.viewer {
    position: absolute;
    left: 2150px;
    top: 222px;
    width: 975px;
    height: 1779px;
    display: flex;
    flex-direction: column;
    border: 2px solid #3a3a3a;
    border-bottom-width: 3px;
    box-shadow: 0 4px 20px rgba(0, 0, 0, 0.35);
}

.viewer-bar {
    flex: none;
    height: 48px;
    display: flex;
    align-items: center;
    background: #2d2d2d;
    color: #eee;
}

.viewer-bar button {
    width: 68px;
    height: 48px;
}

.viewer-bar svg {
    width: 20px;
    height: 20px;
    fill: none;
    stroke: #eee;
    stroke-width: 1.5;
}

.viewer-bar h1 {
    flex: 1;
    padding-left: 9px;
    font-size: 18px;
    font-weight: 400;
}

/* docks */
.dock {
    flex: none;
    width: 74px;
}

.dock-inner {
    width: 86px;
    border: 6px double var(--line);
    border-width: 0 6px;
}

.dock .strip {
    justify-content: flex-end;
    padding: 0 10px;
}

.dock-group {
    display: flex;
    flex-direction: column;
    padding-bottom: 5px;
    border-bottom: 2px solid var(--line);
    fill: var(--ink);
    color: var(--ink);
}

.dock-group button {
    height: 56px;
    padding-left: 4px;
}

.dock-group .active {
    height: 50px;
    margin: 3px 8px;
    padding-left: 2px;
    background: #808080;
    border: 2px solid #747474;
    border-radius: 4px;
}

.dock-covered {
    height: 638px;
    justify-content: flex-end;
}

.icon-t {
    font: 38px "DejaVu Serif", serif;
    fill: var(--ink);
    stroke: var(--ink);
}

.icon-a {
    font: 600 36px "Open Sans", sans-serif;
}

.icon-o {
    font: italic bold 42px "Liberation Serif", serif;
    fill: url(#grad-o);
}

.icon-script {
    font: 36px "DejaVu Math TeX Gyre", "DejaVu Serif", serif;
}

/* floating panels */
.panel {
    position: absolute;
    top: 148px;
    background: var(--face);
    border: 2px solid var(--line);
    border-top: 7px solid #8a8a8a;
    box-shadow: 0 0 8px rgba(0, 0, 0, 0.35);
}

.panel-tabs {
    display: flex;
    height: 55px;
    background: var(--dark);
    color: #555;
}

.panel-tabs > * {
    border-right: 2px solid var(--line);
    border-bottom: 2px solid var(--line);
    padding-bottom: 2px;
}

.panel-tabs .active {
    gap: 12px;
    padding-right: 6px;
    color: #2b2b2b;
    background: var(--face);
    border-bottom: none;
}

.color-panel {
    right: 542px;
    width: 80px;
    height: 512px;
    overflow: hidden;
}

.color-name {
    width: 50px;
    padding-left: 20px;
    justify-content: flex-start;
    overflow: hidden;
}

.color-panel .active {
    display: flex;
    align-items: center;
    padding-left: 6px;
    flex: 1;
    border-right: none;
}

.color-body {
    height: 435px;
    padding: 12px 0 0 10px;
    border-bottom: 4px solid var(--line);
    color: var(--ink);
}

.chips {
    margin-top: 120px;
}

.spectrum {
    height: 144px;
    margin: 20px 0 0 2px;
    border: 2px solid #505050;
    border-right: none;
    background: linear-gradient(#fff, rgba(255, 255, 255, 0) 50%, rgba(0, 0, 0, 0) 50%, #000), linear-gradient(90deg, #f0301c, #f7d51e);
}

.transform-panel {
    right: 76px;
    width: 468px;
    height: 622px;
    display: flex;
    flex-direction: column;
}

.transform-panel .active {
    width: 98px;
}

.tab-align {
    width: 71px;
    padding-left: 14px;
}

.tab-path {
    width: 155px;
}

.panel-tools {
    flex: 1;
    display: flex;
    align-items: center;
    justify-content: flex-end;
    gap: 14px;
    padding-right: 11px;
}

.panel-tools i {
    width: 2px;
    height: 22px;
    background: #666;
}

.transform-body {
    display: flex;
    margin: 0 10px;
    height: 172px;
    padding-top: 12px;
    border-bottom: 2px solid #a6a6a6;
    color: #8c8c8c;
    font-weight: 400;
}

.ref-point {
    margin-top: 28px;
}

.values {
    display: flex;
    flex-direction: column;
    gap: 10px;
    flex: 1;
}

.value-row {
    display: grid;
    grid-template-columns: 47px 118px 44px 118px;
    gap: 6px;
}

.angles {
    grid-template-columns: 47px 114px 36px 114px;
}

.value-row label {
    display: flex;
    align-items: center;
    justify-content: flex-end;
    gap: 4px;
    white-space: nowrap;
}

.value-row input, .value-row select {
    width: 100%;
    height: 42px;
    padding: 0 8px;
    border-radius: 4px;
    background: #afafaf;
    color: #8c8c8c;
    opacity: 1;
}

.value-row select {
    appearance: none;
    padding: 0 6px;
}

.pick {
    display: grid;
    align-items: center;
}

.pick > * {
    grid-area: 1 / 1;
}

.pick svg {
    justify-self: end;
    margin-right: 12px;
}

.unlink {
    margin: 28px 12px 0 0;
}

.empty {
    flex: 1;
    display: flex;
    align-items: center;
    justify-content: center;
    color: #8c8c8c;
}

.checks {
    display: flex;
    flex-direction: column;
    gap: 8px;
    height: 92px;
    margin: 0 10px;
    padding-top: 9px;
    border-top: 2px solid #a6a6a6;
    color: #8c8c8c;
}

.checks label {
    display: flex;
    align-items: center;
    gap: 11px;
}

.checks input {
    appearance: none;
    width: 24px;
    height: 24px;
    margin-left: 2px;
    border: 2px solid #959595;
    border-radius: 3px;
}

/* slivers of what lies behind the window */
.taskbar-edge {
    flex: none;
    height: 3px;
    background: #43478a;
}

.capture-edge {
    position: absolute;
    top: 0;
    left: 1739px;
    width: 362px;
    height: 2px;
    background: linear-gradient(90deg, #6b70c4 20%, #222 20%);
}
```
